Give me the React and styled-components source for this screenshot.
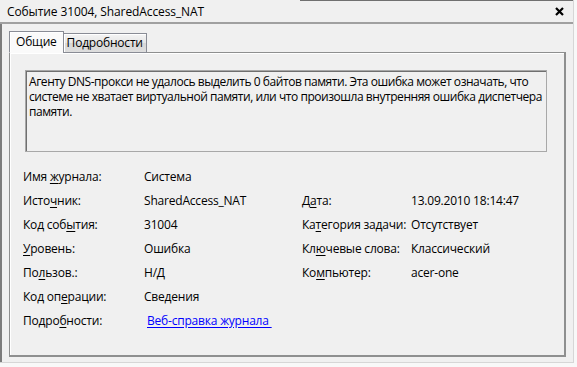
import styled, { createGlobalStyle } from "styled-components";

const Global = createGlobalStyle`
  html, body {
    margin: 0;
    padding: 0;
    background: #f8f8f8;
    overflow: hidden;
  }
  body {
    font-family: "Open Sans", "Noto Sans", sans-serif;
    font-size: 12px;
    letter-spacing: -0.2px;
    color: #000;
  }
`;

const Window = styled.div`
  width: 574px;
  height: 363px;
  background: #f0f0f0;
  box-sizing: border-box;
  border-right: 1px solid #d6d6d6;
  border-bottom: 1px solid #d6d6d6;
  display: flex;
  flex-direction: column;
`;

const TitleBar = styled.div`
  height: 22px;
  flex: none;
  display: flex;
  align-items: center;
  justify-content: space-between;
  padding: 0 9px 0 7px;
  border-bottom: 2px solid #a0a0a0;
  position: relative;

  &::before {
    content: "";
    position: absolute;
    left: 300px;
    right: 0;
    top: 0;
    height: 1px;
    background: #707070;
  }
`;

const Title = styled.span`
  font-size: 12px;
  letter-spacing: -0.1px;
`;

const Close = styled.svg`
  width: 9px;
  height: 9px;
  display: block;
`;

const Body = styled.div`
  flex: 1;
  display: flex;
  flex-direction: column;
  border-left: 2px solid #7c7c7c;
  padding: 7px 7px 5px 7px;
`;

const TabStrip = styled.div`
  display: flex;
  align-items: flex-end;
  height: 22px;
  position: relative;
  z-index: 1;
  margin-bottom: -1px;
`;

const Tab = styled.div`
  box-sizing: border-box;
  height: ${(p) => (p.$active ? "22px" : "20px")};
  padding: 0 ${(p) => (p.$active ? "6px" : "3px")} 1px;
  display: flex;
  align-items: center;
  border: 1px solid #898c95;
  border-bottom: ${(p) => (p.$active ? "1px solid #fafafa" : "1px solid #898c95")};
  margin-left: ${(p) => (p.$active ? "0" : "-1px")};
  background: ${(p) =>
    p.$active ? "#fafafa" : "linear-gradient(#f4f4f4, #e6e6e6 50%, #d7d7d7 51%, #dedede)"};
  box-shadow: inset 1px 1px 0 #ffffff;
  font-size: 12px;
`;

const Panel = styled.div`
  flex: 1;
  box-sizing: border-box;
  width: 557px;
  border: 1px solid #8e8f8f;
  border-right-width: 2px;
  border-bottom-width: 2px;
  box-shadow: inset 1px 1px 0 #ffffff;
  padding: 17px 18px 0 15px;
`;

const Description = styled.div`
  box-sizing: border-box;
  width: 522px;
  height: 82px;
  border-top: 2px solid #6f6f6f;
  border-left: 2px solid #6f6f6f;
  border-right: 1px solid #e2e2e2;
  border-bottom: 1px solid #e2e2e2;
  outline: 1px solid #a8a8a8;
  outline-offset: -1px;
  padding: 2px 0 0 2px;
  line-height: 15px;
  font-size: 12px;
  letter-spacing: -0.45px;
  white-space: nowrap;
  overflow: hidden;
`;

const Fields = styled.div`
  display: grid;
  grid-template-columns: 121px 158px 109px 1fr;
  grid-auto-rows: 24px;
  margin: 12px 0 0 -2px;
  font-size: 12px;
`;

const Cell = styled.div`
  display: flex;
  align-items: center;
  white-space: pre;
  grid-column: ${(p) => p.$col};
  grid-row: ${(p) => p.$row};
  padding-left: ${(p) => (p.$link ? "3px" : "0")};
`;

const Key = styled.span`
  text-decoration: underline;
  text-underline-offset: 2px;
`;

const Link = styled.a`
  color: #0000ff;
  text-decoration: underline;
  text-underline-offset: 2px;
  white-space: pre;
  cursor: pointer;
`;

const left = [
  [["Имя ", "ж", "урнала:"], "Система"],
  [["Исто", "ч", "ник:"], "SharedAccess_NAT"],
  [["Код соб", "ы", "тия:"], "31004"],
  [["", "У", "ровень:"], "Ошибка"],
  [["По", "л", "ьзов.:"], "Н/Д"],
  [["Код оп", "е", "рации:"], "Сведения"],
];

const right = [
  [["Д", "а", "та:"], "13.09.2010 18:14:47"],
  [["Ка", "т", "егория задачи:"], "Отсутствует"],
  [["Кл", "ю", "чевые слова:"], "Классический"],
  [["Ко", "м", "пьютер:"], "acer-one"],
];

function Caption({ parts }) {
  return (
    <span>
      {parts[0]}
      <Key>{parts[1]}</Key>
      {parts[2]}
    </span>
  );
}

export default function App() {
  return (
    <>
      <Global />
      <Window>
        <TitleBar>
          <Title>Событие 31004, SharedAccess_NAT</Title>
          <Close viewBox="0 0 9 9">
            <path d="M1 1 L8 8 M8 1 L1 8" stroke="#000" strokeWidth="2.2" />
          </Close>
        </TitleBar>
        <Body>
          <TabStrip>
            <Tab $active>Общие</Tab>
            <Tab>Подробности</Tab>
          </TabStrip>
          <Panel>
            <Description>
              Агенту DNS-прокси не удалось выделить 0 байтов памяти. Эта ошибка может означать, что
              <br />
              системе не хватает виртуальной памяти, или что произошла внутренняя ошибка диспетчера
              <br />
              памяти.
            </Description>
            <Fields>
              {left.map(([l, v], i) => [
                <Cell key={"l" + i} $col={1} $row={i + 1}>
                  <Caption parts={l} />
                </Cell>,
                <Cell key={"v" + i} $col={2} $row={i + 1}>
                  {v}
                </Cell>,
              ])}
              <Cell $col={1} $row={7}>
                <Caption parts={["Подро", "б", "ности:"]} />
              </Cell>
              <Cell $col={2} $row={7} $link>
                <Link>Веб-справка журнала </Link>
              </Cell>
              {right.map(([l, v], i) => [
                <Cell key={"rl" + i} $col={3} $row={i + 2}>
                  <Caption parts={l} />
                </Cell>,
                <Cell key={"rv" + i} $col={4} $row={i + 2}>
                  {v}
                </Cell>,
              ])}
            </Fields>
          </Panel>
        </Body>
      </Window>
    </>
  );
}
